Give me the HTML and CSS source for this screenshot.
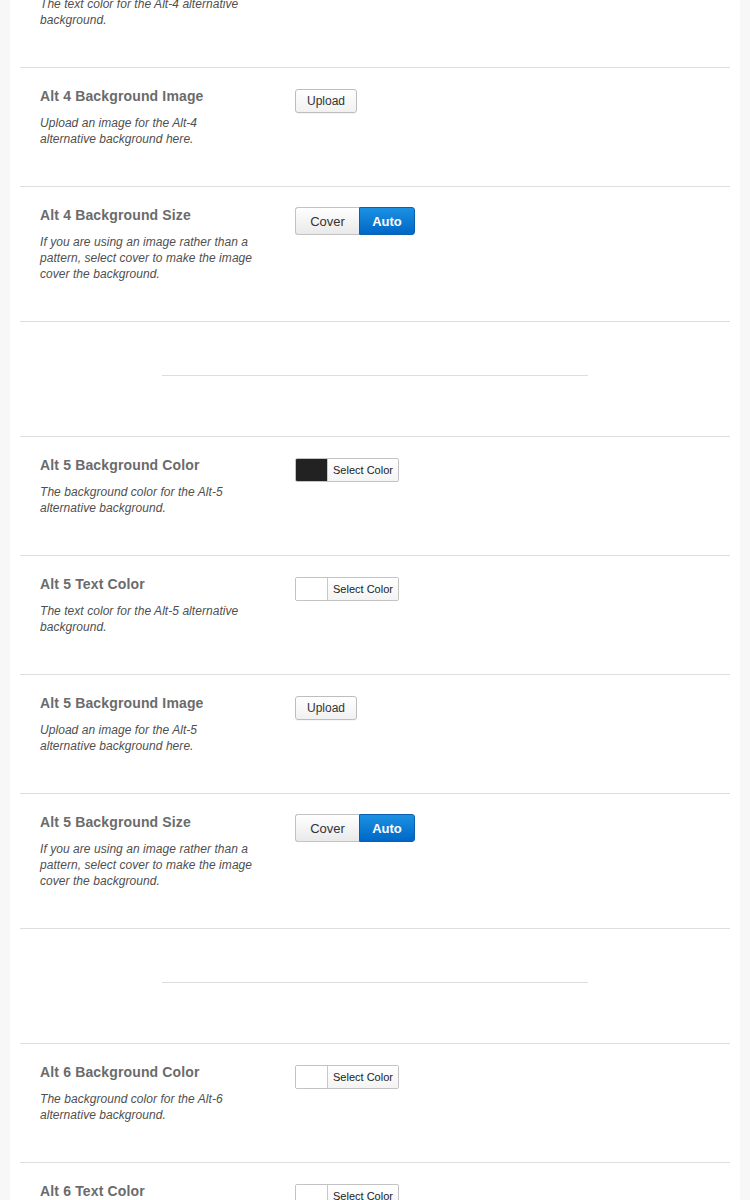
FILE: index.html
```html
<!DOCTYPE html>
<html>
<head>
<meta charset="utf-8">
<link rel="stylesheet" href="styles.css">
</head>
<body>
<div class="panel">
  <div class="row">
    <div class="label">
      <h3 class="title">Alt 4 Text Color</h3>
      <p class="desc">The text color for the Alt-4 alternative background.</p>
    </div>
    <div class="control">
      <div class="picker"><span class="swatch"></span><span class="picker-text">Select Color</span></div>
    </div>
  </div>

  <div class="row">
    <div class="label">
      <h3 class="title">Alt 4 Background Image</h3>
      <p class="desc">Upload an image for the Alt-4 alternative background here.</p>
    </div>
    <div class="control"><button class="btn">Upload</button></div>
  </div>

  <div class="row">
    <div class="label">
      <h3 class="title">Alt 4 Background Size</h3>
      <p class="desc">If you are using an image rather than a pattern, select cover to make the image cover the background.</p>
    </div>
    <div class="control">
      <div class="toggle"><span class="opt">Cover</span><span class="opt active">Auto</span></div>
    </div>
  </div>

  <div class="divider-row"><div class="divider"></div></div>

  <div class="row">
    <div class="label">
      <h3 class="title">Alt 5 Background Color</h3>
      <p class="desc">The background color for the Alt-5 alternative background.</p>
    </div>
    <div class="control">
      <div class="picker"><span class="swatch dark"></span><span class="picker-text">Select Color</span></div>
    </div>
  </div>

  <div class="row">
    <div class="label">
      <h3 class="title">Alt 5 Text Color</h3>
      <p class="desc">The text color for the Alt-5 alternative background.</p>
    </div>
    <div class="control">
      <div class="picker"><span class="swatch"></span><span class="picker-text">Select Color</span></div>
    </div>
  </div>

  <div class="row">
    <div class="label">
      <h3 class="title">Alt 5 Background Image</h3>
      <p class="desc">Upload an image for the Alt-5 alternative background here.</p>
    </div>
    <div class="control"><button class="btn">Upload</button></div>
  </div>

  <div class="row">
    <div class="label">
      <h3 class="title">Alt 5 Background Size</h3>
      <p class="desc">If you are using an image rather than a pattern, select cover to make the image cover the background.</p>
    </div>
    <div class="control">
      <div class="toggle"><span class="opt">Cover</span><span class="opt active">Auto</span></div>
    </div>
  </div>

  <div class="divider-row"><div class="divider"></div></div>

  <div class="row">
    <div class="label">
      <h3 class="title">Alt 6 Background Color</h3>
      <p class="desc">The background color for the Alt-6 alternative background.</p>
    </div>
    <div class="control">
      <div class="picker"><span class="swatch"></span><span class="picker-text">Select Color</span></div>
    </div>
  </div>

  <div class="row">
    <div class="label">
      <h3 class="title">Alt 6 Text Color</h3>
      <p class="desc">The text color for the Alt-6 alternative background.</p>
    </div>
    <div class="control">
      <div class="picker"><span class="swatch"></span><span class="picker-text">Select Color</span></div>
    </div>
  </div>
</div>
</body>
</html>
```
FILE: styles.css
```css
html, body {
  margin: 0;
  padding: 0;
  background: #f7f7f7;
  font-family: "Liberation Sans", Arial, sans-serif;
  overflow: hidden;
}

.panel {
  background: #ffffff;
  margin: -52px 10px 0 10px;
  padding: 0 10px;
  min-height: 1400px;
}

.row {
  display: flex;
  padding: 20px 0 39px 20px;
  border-top: 1px solid #dddddd;
}

.label {
  width: 214px;
  flex: none;
}

.title {
  margin: 0;
  font-size: 14px;
  line-height: 17px;
  font-weight: bold;
  letter-spacing: 0.15px;
  color: #6b6b6b;
}

.desc {
  margin: 10px 0 0 0;
  font-size: 12px;
  line-height: 16px;
  font-style: italic;
  letter-spacing: 0.05px;
  color: #4f4f4f;
}

.control {
  margin-left: 41px;
  padding-top: 1px;
}

.btn {
  display: block;
  height: 24px;
  width: 62px;
  margin: 0;
  padding: 0;
  border: 1px solid #bdbdbd;
  border-radius: 3px;
  background: linear-gradient(#ffffff, #f1f1f1);
  font-family: "Liberation Sans", Arial, sans-serif;
  font-size: 12px;
  color: #333333;
  box-shadow: 0 1px 0 rgba(0,0,0,0.04);
}

.toggle {
  display: flex;
  height: 28px;
  margin-top: -1px;
}
.opt {
  display: flex;
  align-items: center;
  justify-content: center;
  box-sizing: border-box;
  height: 28px;
  font-size: 13px;
  color: #333333;
}
.opt:first-child {
  width: 64px;
  border: 1px solid #c3c3c3;
  border-right: none;
  border-radius: 3px 0 0 3px;
  background: linear-gradient(#ffffff, #e9e9e9);
}
.opt.active {
  width: 56px;
  border: 1px solid #0a5fb0;
  border-radius: 0 3px 3px 0;
  background: linear-gradient(#1b91e3, #0067c6);
  color: #ffffff;
  font-weight: bold;
}

.picker {
  display: flex;
  box-sizing: border-box;
  width: 104px;
  height: 24px;
  border: 1px solid #c3c3c3;
  border-radius: 2px;
  overflow: hidden;
}
.swatch {
  width: 31px;
  flex: none;
  background: #ffffff;
  border-right: 1px solid #c8c8c8;
}
.swatch.dark {
  background: #222222;
}
.picker-text {
  flex: 1;
  display: flex;
  align-items: center;
  justify-content: center;
  font-size: 11px;
  color: #222222;
  background: linear-gradient(#ffffff, #f4f4f4);
}

.divider-row {
  border-top: 1px solid #dddddd;
  height: 114px;
  display: flex;
  justify-content: center;
}
.divider {
  width: 426px;
  height: 1px;
  margin-top: 53px;
  background: #dddddd;
}
```
